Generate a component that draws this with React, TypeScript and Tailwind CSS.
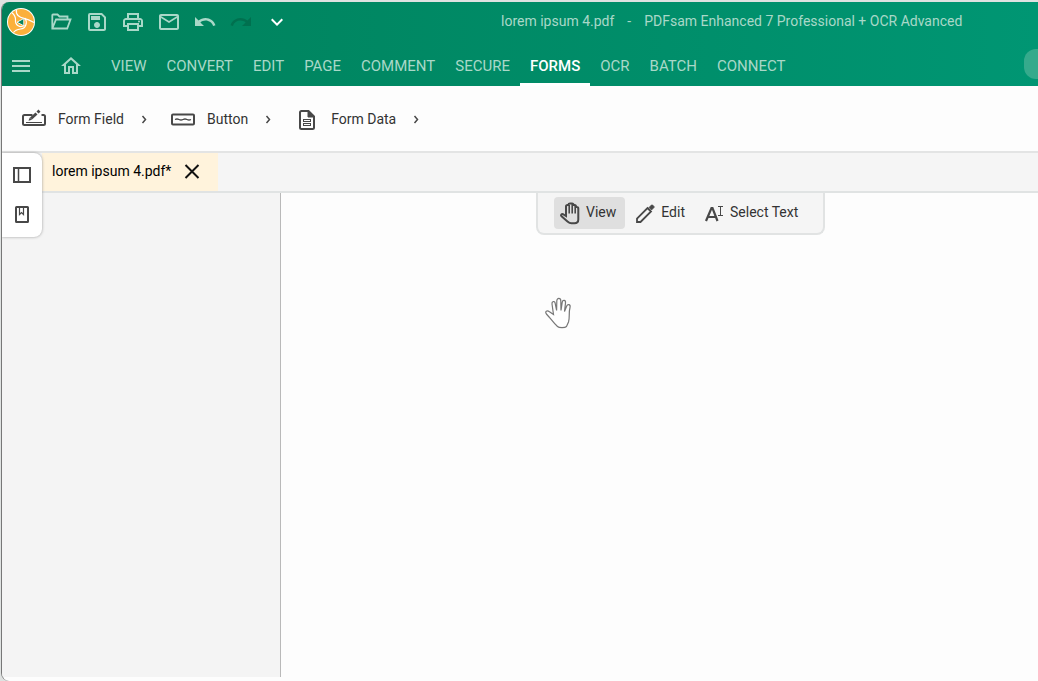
import React, { useState } from 'react';
import {
  MdKeyboardArrowDown,
  MdMenu,
  MdOutlineEmail,
  MdOutlineHome,
  MdOutlinePrint,
  MdOutlineSave,
  MdRedo,
  MdUndo,
} from 'react-icons/md';

const TABS = ['VIEW', 'CONVERT', 'EDIT', 'PAGE', 'COMMENT', 'SECURE', 'FORMS', 'OCR', 'BATCH', 'CONNECT'];

const FolderIcon = () => (
  <svg width="24" height="24" viewBox="0 0 24 24" fill="none" stroke="currentColor" strokeWidth="1.8">
    <path d="M18.500 9V6.500H10.500L8.500 4.500H4Q3.300 4.500 3.300 5.200V18.500H18.200L21.500 9.500H7L3.500 18" />
  </svg>
);

const QUICK_ACTIONS = [
  { label: 'Open', icon: <FolderIcon /> },
  { label: 'Save', icon: <MdOutlineSave size={24} /> },
  { label: 'Print', icon: <MdOutlinePrint size={24} /> },
  { label: 'Email', icon: <MdOutlineEmail size={24} /> },
  { label: 'Undo', icon: <MdUndo size={24} /> },
];

const Logo = () => (
  <svg width="28" height="28" viewBox="0 0 28 28">
    <circle cx="14" cy="14" r="14" fill="#fff" />
    <circle cx="14" cy="14" r="13" fill="#fbb03b" />
    <g fill="none" stroke="#fff" strokeWidth="1.2">
      <path d="M9.500 2C8.500 6.500 12 9.500 17 10.300C21 11 24.500 13 27 14.500" />
      <path d="M18 10C21 15 18.500 20.500 13.500 21C10 21.500 7.500 23 6.500 24.500" />
      <path d="M17.500 17.500C13 20 8 17.500 8.500 12C8.800 8.500 7 6.500 5 4.800" />
    </g>
    <path d="M10 14.200L16.800 10.500L16.800 17.800Z" fill="#04845e" stroke="#fff" strokeWidth="0.900" />
  </svg>
);

const FormFieldIcon = () => (
  <svg width="24" height="24" viewBox="0 0 24 24" fill="none" stroke="#484848">
    <path d="M10.500 8H2.500Q1 8 1 9.500V16.500Q1 18 2.500 18H21.500Q23 18 23 16.500V9.500Q23 8 21.500 8H19.500" strokeWidth="2" />
    <path d="M4 15.500H20" />
    <path d="M9 11.500L14.500 6.500" strokeWidth="3" />
    <path d="M15.500 5.500L17.500 3.700" strokeWidth="3" />
    <path d="M6.500 13.800L7.800 10.500L10 12.800Z" fill="#484848" stroke="none" />
  </svg>
);

const ButtonIcon = () => (
  <svg width="24" height="24" viewBox="0 0 24 24" fill="none" stroke="#484848">
    <rect x="1" y="7.500" width="22" height="10" rx="1" strokeWidth="2" />
    <path d="M4 12.500Q6 11.500 8 12.500T12 12.500T16 12.500T20 12.500" strokeWidth="1.300" />
  </svg>
);

const FormDataIcon = () => (
  <svg width="24" height="24" viewBox="0 0 24 24" fill="none" stroke="#484848">
    <path d="M13.500 4H6.500Q5 4 5 5.500V20.500Q5 22 6.500 22H17.500Q19 22 19 20.500V9.500L13.500 4Z" strokeWidth="2" />
    <path d="M13 4V10H19Z" fill="#484848" />
    <rect x="8.500" y="12.500" width="7" height="2" />
    <rect x="8.500" y="16.500" width="7" height="2" />
  </svg>
);

const ChevronIcon = () => (
  <svg className="ml-2" width="24" height="24" viewBox="0 0 24 24" fill="none" stroke="#484848" strokeWidth="1.500">
    <path d="M10.500 9L13.500 12.500L10.500 16" />
  </svg>
);

const PanelIcon = () => (
  <svg width="24" height="24" viewBox="0 0 24 24" fill="none" stroke="#484848" strokeWidth="2">
    <rect x="4" y="5" width="16" height="14" />
    <path d="M8.500 5V19" strokeWidth="1.500" />
  </svg>
);

const BookmarkIcon = () => (
  <svg width="24" height="24" viewBox="0 0 24 24" fill="none" stroke="#484848" strokeWidth="2">
    <rect x="6" y="4" width="12" height="15" rx="0.500" />
    <path d="M9.500 5V11.500L11.500 9.500L13.500 11.500V5" strokeWidth="1.200" />
  </svg>
);

const HandIcon = () => (
  <svg width="24" height="24" viewBox="0 0 24 24" fill="none" stroke="#484848" strokeWidth="2">
    <path d="M9.500 20.500L3.300 15C2.500 14 3.500 12.700 5 13.200L8 15V5.500Q8 4 9.500 4H10.500V3.500Q10.500 2.500 12 2.500H14Q15.500 2.500 15.500 4H16.500Q18 4 18 5.500V6H18.800Q20.300 6 20.300 7.500V18.500Q20.300 22.300 16.500 22.300H13.500Q11.500 22.300 9.500 20.500Z" />
    <path d="M11.200 4V12.500M14.200 3V12.500M17.200 5V12.500" strokeWidth="1.600" />
  </svg>
);

const PencilIcon = () => (
  <svg width="24" height="24" viewBox="0 0 24 24" fill="none" stroke="#484848" strokeWidth="1.800">
    <path d="M4 21V17.500L14.500 7L18 10.500L7.500 21Z" />
    <path d="M16 6.500L18.500 4Q19 3.500 19.500 4L21 5.500Q21.500 6 21 6.500L18.500 9Z" fill="#484848" strokeWidth="0.800" />
  </svg>
);

const SelectTextIcon = () => (
  <svg width="24" height="24" viewBox="0 0 24 24" fill="none" stroke="#484848">
    <path d="M4 20L9.500 7H10.500L15.500 20M6 16H14" strokeWidth="2.200" />
    <path d="M16 5.500H21M16 14.500H21M18.500 5.500V14.500" />
  </svg>
);

const HandCursor = () => (
  <svg width="28" height="32" viewBox="0 0 28 32" fill="#fff" stroke="#777" strokeWidth="1.200">
    <path d="M8.500 17.500L7 7C6.600 4.200 9.600 3.500 10.200 6.300L11.600 13.500L11.800 4C11.800 .5 15.800 .5 15.800 4L16 13.500L17.200 5.300C17.700 2.400 20.900 2.800 20.500 6L19.500 14.500L21.600 9.200C22.700 6.400 25.800 7.400 25 10.500C23.500 16 25 20 23.500 25L21.500 29.500C20 31 14 31 12.500 29.500C9 26.500 6 22 4.500 20.500L1.400 17C-.5 14.500 2 12.800 4.500 14.800Z" />
  </svg>
);

const RIBBON_ITEMS = [
  { label: 'Form Field', icon: <FormFieldIcon /> },
  { label: 'Button', icon: <ButtonIcon /> },
  { label: 'Form Data', icon: <FormDataIcon /> },
];

const MODES = [
  { label: 'View', icon: <HandIcon /> },
  { label: 'Edit', icon: <PencilIcon /> },
  { label: 'Select Text', icon: <SelectTextIcon /> },
];

export default function App() {
  const [activeTab, setActiveTab] = useState('FORMS');
  const [mode, setMode] = useState('View');

  return (
    <div className="flex min-h-screen flex-col bg-[#dfe2e1] pt-0.5 pl-px font-['Roboto',sans-serif] text-sm text-[#333]">
      <div className="flex flex-1 flex-col overflow-hidden rounded-l-lg border-l border-[#777] bg-[#fdfdfd]">
        <header className="-ml-px bg-linear-to-r from-[#00805a] to-[#009673] text-[#a9d8c8]">
          <div className="flex h-10 items-center pl-1.5">
            <Logo />
            <div className="ml-2 flex">
              {QUICK_ACTIONS.map((action) => (
                <button key={action.label} aria-label={action.label} className="flex w-9 justify-center">
                  {action.icon}
                </button>
              ))}
              <button aria-label="Redo" disabled className="flex w-9 justify-center text-[#00704f]">
                <MdRedo size={24} />
              </button>
              <button aria-label="Customize" className="flex w-9 justify-center text-white">
                <MdKeyboardArrowDown size={24} />
              </button>
            </div>
            <div className="ml-[206px] flex gap-[13px] pb-0.5 whitespace-nowrap">
              <span>lorem ipsum 4.pdf</span>
              <span>-</span>
              <span>PDFsam Enhanced 7 Professional + OCR Advanced</span>
            </div>
          </div>
          <div className="flex h-11 items-center pl-2">
            <button aria-label="Menu" className="pt-1">
              <MdMenu size={24} />
            </button>
            <button aria-label="Home" className="ml-[26px] pt-1">
              <MdOutlineHome size={24} />
            </button>
            <nav className="ml-[18px] flex h-full">
              {TABS.map((tab) => (
                <button
                  key={tab}
                  onClick={() => setActiveTab(tab)}
                  className={`border-b-3 px-2.5 pt-2 text-[15px] ${
                    tab === activeTab ? 'border-white font-medium text-white' : 'border-transparent'
                  }`}
                >
                  {tab}
                </button>
              ))}
            </nav>
            <div className="-mr-6 ml-auto h-[30px] w-[38px] shrink-0 rounded-xl bg-[#35aa8c]" />
          </div>
        </header>

        <div className="flex h-[67px] items-center gap-[15px] border-b-2 border-[#e3e4e4] pl-5">
          {RIBBON_ITEMS.map((item) => (
            <button key={item.label} className="flex items-center">
              {item.icon}
              <span className="ml-3">{item.label}</span>
              <ChevronIcon />
            </button>
          ))}
        </div>

        <div className="relative flex flex-1 flex-col">
          <div className="flex h-10 border-b-2 border-[#e0e3e3] bg-[#f5f5f5] pl-10">
            <div className="flex items-center gap-[13px] bg-[#fff3dc] pr-[18px] pl-2.5 text-black">
              <span className="pb-[3px]">lorem ipsum 4.pdf*</span>
              <button aria-label="Close tab">
                <svg width="16" height="16" viewBox="0 0 16 16" stroke="#111" strokeWidth="2">
                  <path d="M1.500 1L14.500 14M14.500 1L1.500 14" />
                </svg>
              </button>
            </div>
          </div>

          <aside className="absolute top-0 left-0 flex w-10 flex-col rounded-r-lg bg-white py-0.5 shadow-[0_0_3px_#999]">
            <button aria-label="Pages" className="flex h-10 items-center justify-center">
              <PanelIcon />
            </button>
            <button aria-label="Bookmarks" className="flex h-10 items-center justify-center">
              <BookmarkIcon />
            </button>
          </aside>

          <main className="mb-1 flex flex-1">
            <div className="w-[279px] shrink-0 border-r border-[#b9b9b9] bg-[#f4f4f4]" />
            <div className="relative flex-1">
              <div className="ml-[255px] flex w-fit gap-1 rounded-b-lg border-2 border-t-0 border-[#e1e3e3] bg-[#f5f5f5] px-4 py-1">
                {MODES.map((item) => (
                  <button
                    key={item.label}
                    onClick={() => setMode(item.label)}
                    className={`flex h-8 items-center gap-1 rounded-sm pr-[9px] pl-1 ${mode === item.label ? 'bg-[#dfdfdf]' : ''}`}
                  >
                    {item.icon}
                    <span className="pb-0.5">{item.label}</span>
                  </button>
                ))}
              </div>
              <div className="absolute top-26 left-66">
                <HandCursor />
              </div>
            </div>
          </main>
        </div>
      </div>
    </div>
  );
}
